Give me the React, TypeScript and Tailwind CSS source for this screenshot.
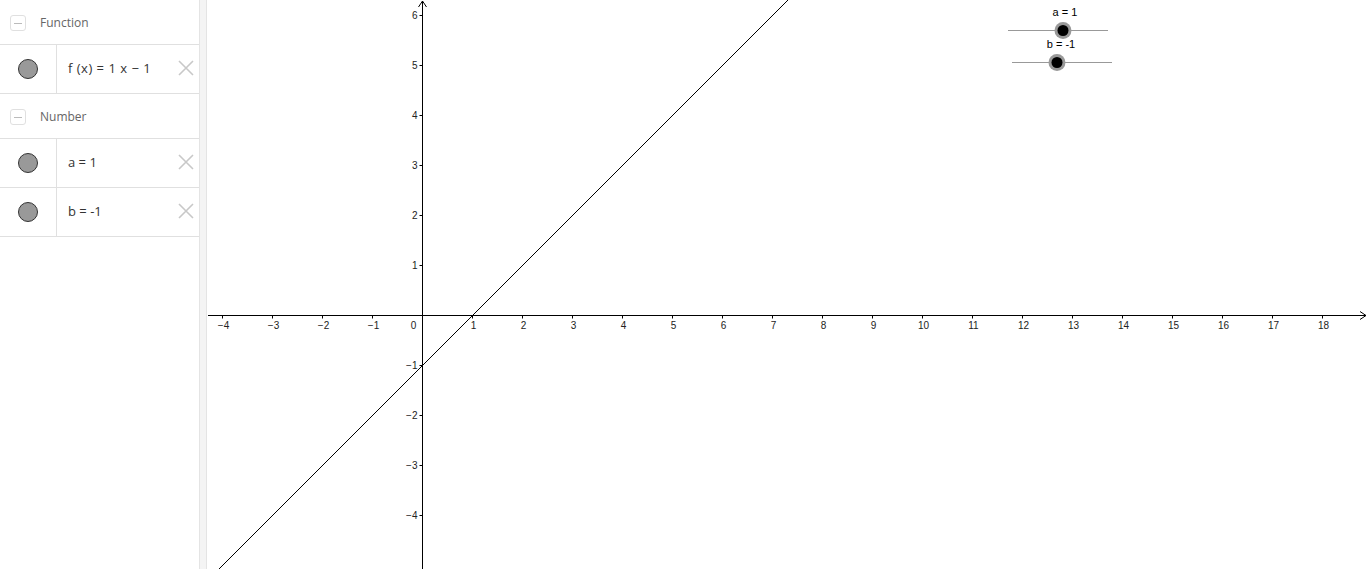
import React from "react";

const OX = 215.5; // origin inside the graphics view (page x 422.5)
const OY = 315.5;
const U = 50;

function Dot() {
  return (
    <div className="flex w-[57px] shrink-0 items-center justify-center self-stretch border-r border-[#e0e0e0]">
      <div className="h-[20px] w-[20px] rounded-full border border-[#333] bg-[#999]" />
    </div>
  );
}

function Cross() {
  return (
    <svg width="18" height="18" viewBox="0 0 18 18" className="mr-[4px] mb-[3px] shrink-0">
      <path d="M2 2 L16 16 M16 2 L2 16" stroke="#c8c8c8" strokeWidth="1.6" />
    </svg>
  );
}

function Header({ label }: { label: string }) {
  return (
    <div className="flex h-[45px] items-center border-b border-[#e0e0e0] pt-[2px]">
      <div className="ml-[10px] flex h-[16px] w-[16px] items-center justify-center rounded-[3px] border border-[#e0e0e0]">
        <div className="h-px w-[8px] bg-[#bbb]" />
      </div>
      <span className="ml-[14px] text-[12px] text-[#666]">{label}</span>
    </div>
  );
}

function Row({ children }: { children: React.ReactNode }) {
  return (
    <div className="flex h-[49px] items-center border-b border-[#e0e0e0]">
      <Dot />
      <div className="flex-1 pl-[11px] text-[13px] text-[#333]">{children}</div>
      <Cross />
    </div>
  );
}

function Graph() {
  const xs: number[] = [];
  for (let i = -4; i <= 18; i++) if (i !== 0) xs.push(i);
  const ys: number[] = [];
  for (let i = -4; i <= 6; i++) if (i !== 0) ys.push(i);
  const lbl = (n: number) => (n < 0 ? "\u2212" + Math.abs(n) : String(n));
  // f(x) = x - 1
  const xa = -5.2;
  const xb = 7.6;
  return (
    <svg width="1161" height="569" className="block" style={{ fontFamily: "'Liberation Sans', Arial, sans-serif" }}>
      {/* axes */}
      <line x1="1" y1={OY} x2="1159" y2={OY} stroke="#000" strokeWidth="1" />
      <path d={`M1153 ${OY - 4} L1159 ${OY} L1153 ${OY + 4}`} fill="none" stroke="#000" />
      <line x1={OX} y1="1" x2={OX} y2="569" stroke="#000" strokeWidth="1" />
      <path d={`M${OX - 4} 7 L${OX} 1 L${OX + 4} 7`} fill="none" stroke="#000" />
      {xs.map((v) => (
        <g key={"x" + v}>
          <line x1={OX + v * U} y1={OY} x2={OX + v * U} y2={OY + 3} stroke="#000" />
          <text x={OX + v * U + 1} y={OY + 13} fontSize="10" textAnchor="middle" fill="#222">
            {lbl(v)}
          </text>
        </g>
      ))}
      <text x={OX - 9} y={OY + 13} fontSize="10" textAnchor="middle" fill="#222">
        0
      </text>
      {ys.map((v) => (
        <g key={"y" + v}>
          <line x1={OX - 3} y1={OY - v * U} x2={OX} y2={OY - v * U} stroke="#000" />
          <text x={OX - 5} y={OY - v * U + 3.5} fontSize="10" textAnchor="end" fill="#222">
            {lbl(v)}
          </text>
        </g>
      ))}
      {/* function line */}
      <line
        x1={OX + xa * U}
        y1={OY - (xa - 1) * U}
        x2={OX + xb * U}
        y2={OY - (xb - 1) * U}
        stroke="#000"
        strokeWidth="1"
      />
      {/* sliders */}
      <text x="858" y="15.5" fontSize="11" textAnchor="middle" fill="#000">
        a = 1
      </text>
      <line x1="801" y1="30.5" x2="901" y2="30.5" stroke="#999" />
      <circle cx="856" cy="30.5" r="8.5" fill="#999" />
      <circle cx="856" cy="30.5" r="5.5" fill="#000" />
      <text x="854" y="47.5" fontSize="11" textAnchor="middle" fill="#000">
        b = -1
      </text>
      <line x1="805" y1="62.5" x2="905" y2="62.5" stroke="#999" />
      <circle cx="850" cy="62.5" r="8.5" fill="#999" />
      <circle cx="850" cy="62.5" r="5.5" fill="#000" />
    </svg>
  );
}

export default function App() {
  return (
    <div
      className="flex h-[569px] w-[1368px] overflow-hidden bg-white"
      style={{ fontFamily: "'Open Sans', 'Noto Sans', sans-serif" }}
    >
      <div className="w-[200px] shrink-0 border-r border-[#e4e4e4]">
        <Header label="Function" />
        <Row>
          <span className="tracking-[0.5px]">f (x) = 1 x − 1</span>
        </Row>
        <Header label="Number" />
        <Row>a = 1</Row>
        <Row>b = -1</Row>
      </div>
      <div className="w-[7px] shrink-0 border-r border-[#e4e4e4] bg-[#f4f4f4]" />
      <div className="flex-1">
        <Graph />
      </div>
    </div>
  );
}
